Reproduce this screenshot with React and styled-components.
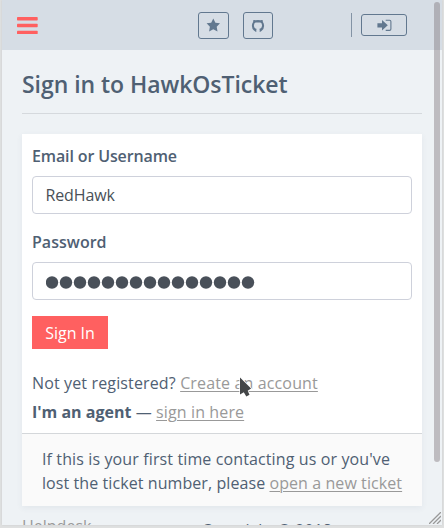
import React from "react";
import styled, { createGlobalStyle } from "styled-components";

const Global = createGlobalStyle`
  *, *::before, *::after { box-sizing: border-box; }
  html, body { margin: 0; height: 100%; overflow: hidden; }
  body { background: #dfe0e0; font: 16px/24px "Open Sans", "Noto Sans", sans-serif; color: #4f6073; }
`;

const Frame = styled.div`
  position: relative;
  width: 440px;
  height: 525px;
  margin-left: 2px;
  overflow: hidden;
  background: #eef2f5;
  box-shadow: 0 0 2px #c9cbcc;
`;

const Header = styled.header`
  display: flex;
  height: 50px;
  padding: 0 35px 0 15px;
  background: #d6dde5;
`;

const MenuButton = styled.button`
  width: 21px;
  height: 18px;
  margin: 17px 0 0;
  padding: 0;
  border: 0;
  background: none;
  svg { display: block; }
`;

const HeaderButton = styled.a`
  display: flex;
  align-items: center;
  justify-content: center;
  width: ${(p) => p.$width}px;
  height: ${(p) => p.$height}px;
  margin: ${(p) => p.$margin};
  border: 1px solid #62788f;
  border-radius: 3px;
  color: #62788f;
`;

const Divider = styled.span`
  width: 1px;
  height: 24px;
  margin: 13px 9px 0 auto;
  background: #8393a5;
`;

const Main = styled.main`
  width: 400px;
  margin-left: 20px;
`;

const Title = styled.h1`
  height: 64px;
  margin: 0 0 20px;
  padding-top: 18px;
  border-bottom: 1px solid #d5d9dd;
  font-size: 23px;
  font-weight: 600;
  line-height: 32px;
  letter-spacing: -0.05px;
  white-space: nowrap;
`;

const Card = styled.section`
  height: 372px;
  background: #fff;
  box-shadow: 0 2px 6px rgba(70, 90, 110, 0.07);
`;

const Form = styled.form`
  height: 299px;
  padding: 10px 10px 0;
`;

const Field = styled.label`
  display: block;
  height: 86px;
  font-weight: 600;
  letter-spacing: ${(p) => p.$spacing}px;
`;

const Input = styled.div`
  display: flex;
  align-items: center;
  height: 38px;
  margin-top: 8px;
  padding-left: 12.5px;
  border: 1px solid #ced1db;
  border-radius: 4px;
  background: #fff;
  color: #495057;
  font-weight: 400;
`;

const Dots = styled.svg`
  margin-top: 3px;
  fill: #495059;
`;

const Submit = styled.button`
  display: block;
  width: 76px;
  height: 33px;
  margin: 0 0 22px;
  padding: 1px 0 0;
  border: 0;
  background: #ff6060;
  color: #fff;
  font: inherit;
`;

const Line = styled.p`
  margin: 0 0 5px;
  letter-spacing: ${(p) => p.$spacing}px;
  white-space: nowrap;
  strong { font-weight: 700; letter-spacing: 0; }
`;

const Link = styled.a`
  color: #999;
  text-decoration: underline;
  text-decoration-thickness: 1px;
  text-underline-offset: 2px;
`;

const Notice = styled.div`
  height: 73px;
  padding: 13px 0 0 20px;
  border-top: 1px solid #d4d7da;
  background: #fafafa;
  white-space: nowrap;
`;

const NoticeLine = styled.span`
  display: block;
  letter-spacing: ${(p) => p.$spacing}px;
`;

const Footer = styled.footer`
  display: flex;
  gap: 110px;
  margin-top: 8px;
  white-space: nowrap;
`;

const FooterLink = styled.span`
  color: #999;
`;

const Copyright = styled.span`
  padding-top: 4px;
`;

const Scrollbar = styled.div`
  position: absolute;
  top: 2px;
  right: 2px;
  width: 6px;
  height: 460px;
  border-radius: 3px;
  background: rgba(125, 115, 120, 0.42);
`;

const Grip = styled.svg`
  position: absolute;
  right: 1px;
  bottom: 1px;
`;

const Pointer = styled.svg`
  position: absolute;
  left: 236px;
  top: 374px;
`;

export default function App() {
  return (
    <>
      <Global />
      <Frame>
        <Header>
          <MenuButton aria-label="Menu">
            <svg width="21" height="18" fill="#ff6060">
              <rect width="20.7" height="3.4" rx=".7" />
              <rect y="6.8" width="20.7" height="3.4" rx=".7" />
              <rect y="13.7" width="20.7" height="3.4" rx=".7" />
            </svg>
          </MenuButton>
          <HeaderButton $width={31} $height={27} $margin="12px 0 0 160px" aria-label="Favorites">
            <svg width="15" height="15" viewBox="0 0 15 15" fill="currentColor">
              <path d="M7.3.4 9.4 4.7l4.6.6-3.3 3.4.8 4.8-4.2-2.2-4.2 2.2.8-4.8L.6 5.3l4.6-.6Z" />
            </svg>
          </HeaderButton>
          <HeaderButton $width={30} $height={27} $margin="12px 0 0 14px" aria-label="GitHub">
            <svg width="14" height="14" viewBox="0 0 14 14" fill="currentColor">
              <path d="M2.4 1Q3.6 .8 4.6 1.3Q7 .7 9.4 1.3Q10.4 .8 11.6 1L11.9 2.9Q13.2 4.4 13.1 7Q12.9 10 11 11.6Q9.8 12.8 8.7 12.9V10.6L8.2 10Q10.9 9.4 11.1 6.7Q11.1 3.9 9.4 3.5Q7 3.7 4.6 3.5Q2.9 3.9 2.9 6.7Q3.1 9.4 5.8 10L5.3 10.6V12.9Q4.2 12.8 3 11.6Q1 10 .9 7Q.8 4.4 2.1 2.9Z" />
            </svg>
          </HeaderButton>
          <Divider />
          <HeaderButton $width={46} $height={22} $margin="14px 0 0 0" aria-label="Sign in">
            <svg width="15" height="12" viewBox="0 0 15 12" fill="currentColor">
              <path d="M.4 4.3H5V1.1l5.8 5.2L5 11.4V8.6H.4Z" />
              <path d="M8.7 1.2h3.9a1.3 1.3 0 0 1 1.3 1.3v7.6a1.3 1.3 0 0 1-1.3 1.3H8.7" fill="none" stroke="currentColor" strokeWidth="1.1" />
            </svg>
          </HeaderButton>
        </Header>
        <Main>
          <Title>Sign in to HawkOsTicket</Title>
          <Card>
            <Form as="div">
              <Field $spacing={-0.13}>
                Email or Username
                <Input>RedHawk</Input>
              </Field>
              <Field $spacing={0.03}>
                Password
                <Input>
                  <Dots width="211" height="13" aria-label="Password">
                    {Array.from({ length: 15 }, (_, i) => (
                      <circle key={i} cx={6 + i * 14} cy="6.5" r="6.2" />
                    ))}
                  </Dots>
                </Input>
              </Field>
              <Submit>Sign In</Submit>
              <Line $spacing={0.14}>Not yet registered? <Link>Create an account</Link></Line>
              <Line $spacing={0.12}><strong>I'm an agent</strong> — <Link>sign in here</Link></Line>
            </Form>
            <Notice>
              <NoticeLine $spacing={0.12}>If this is your first time contacting us or you've</NoticeLine>
              <NoticeLine $spacing={0.08}>lost the ticket number, please <Link>open a new ticket</Link></NoticeLine>
            </Notice>
          </Card>
          <Footer>
            <FooterLink>Helpdesk</FooterLink>
            <Copyright>Copyright © 2018</Copyright>
          </Footer>
        </Main>
        <Scrollbar />
        <Grip width="12" height="12" viewBox="0 0 12 12" stroke="#999" fill="none">
          <path d="M0 12 12 0M4 12l8-8M8 12l4-4" strokeWidth="1.3" />
        </Grip>
        <Pointer width="18" height="26" viewBox="0 0 18 26">
          <path d="M2 3.5v17l3.8-2.2 2.5 4.2 3.2-1.7-1.8-4.1 3.4-2.2Z" fill="#444648" stroke="#fff" strokeWidth="1.3" paintOrder="stroke" />
        </Pointer>
      </Frame>
    </>
  );
}
